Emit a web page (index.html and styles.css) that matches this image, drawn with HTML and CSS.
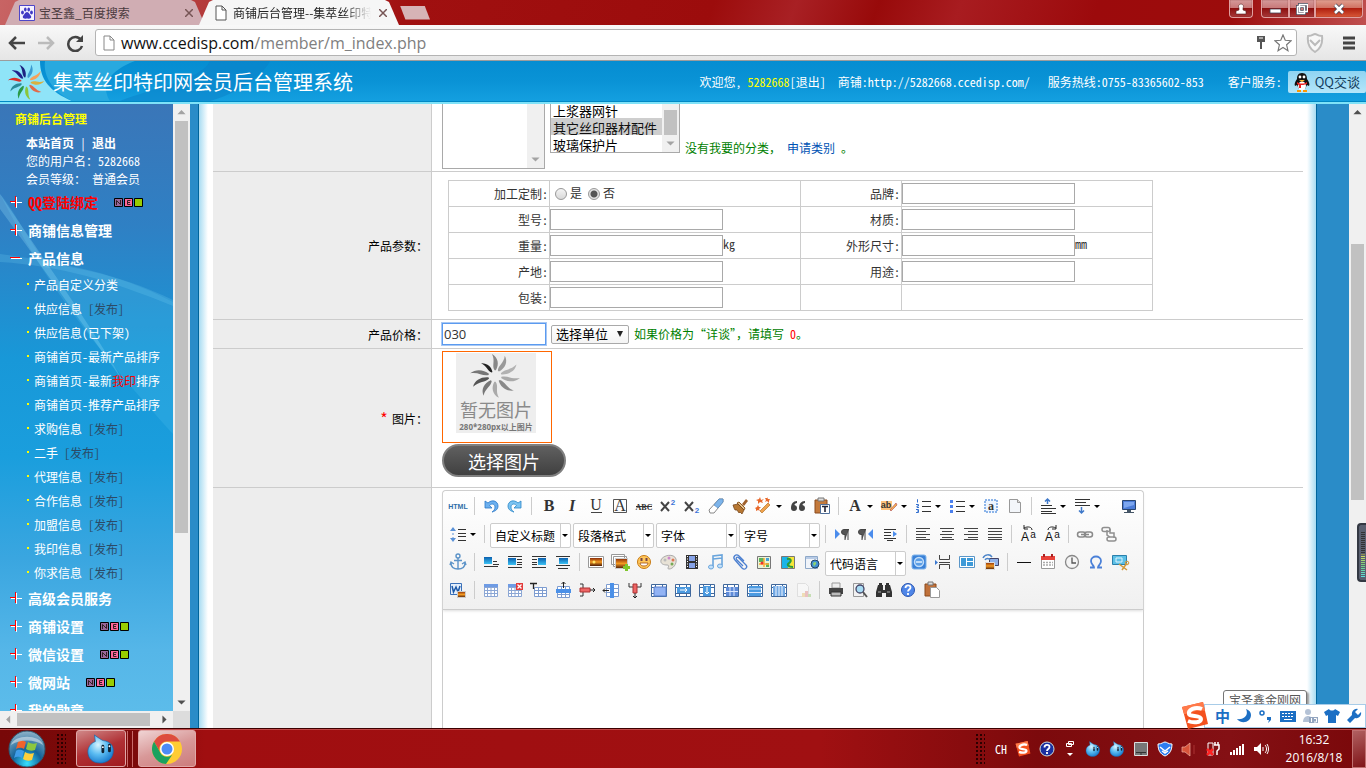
FILE: index.html
```html
<!DOCTYPE html>
<html lang="zh-CN">
<head>
    <meta charset="UTF-8">
    <meta name="viewport" content="width=device-width, initial-scale=1.0">
    <title>商铺后台管理--集萃丝印特印网</title>
    <link rel="stylesheet" href="styles.css">
</head>
<body>
    <!-- Shared icon shapes -->
    <svg class="sprite" aria-hidden="true">
        <defs>
            <linearGradient id="g-sky" x1="0" y1="0" x2="0" y2="1"><stop offset="0" stop-color="#0a5fae"/><stop offset="1" stop-color="#3cc3f5"/></linearGradient>
            <linearGradient id="g-sunset" x1="0" y1="0" x2="0" y2="1"><stop offset="0" stop-color="#8a2c08"/><stop offset=".5" stop-color="#f49a22"/><stop offset="1" stop-color="#4a1a08"/></linearGradient>
            <radialGradient id="g-orb" cx=".5" cy=".9" r=".9"><stop offset="0" stop-color="#35e0ff"/><stop offset=".45" stop-color="#12639a"/><stop offset="1" stop-color="#8fb3c8"/></radialGradient>
            <radialGradient id="g-drop" cx=".4" cy=".35" r=".7"><stop offset="0" stop-color="#d8f4ff"/><stop offset=".5" stop-color="#5bbcf2"/><stop offset="1" stop-color="#1678cc"/></radialGradient>
        </defs>
        <symbol id="petal" viewBox="-5 -20 10 20" overflow="visible"><path d="M-.5-5C-3-9 0-13-3-19C2-16 3-10 .5-5z"/></symbol>
        <symbol id="plus" viewBox="0 0 12 12"><path d="M1 6.500h11M6.500 1v11" stroke="#fff"/><path d="M0 5.500h6M5.500 0v6M5.500 6v5" stroke="#f00"/></symbol>
        <symbol id="minus" viewBox="0 0 12 12"><path d="M1 6.500h11" stroke="#fff"/><path d="M0 5.500h10" stroke="#f00"/></symbol>
        <symbol id="new" viewBox="0 0 29 9">
            <rect width="9" height="9" rx="1"/><rect x="10" width="9" height="9" rx="1"/><rect x="20" width="9" height="9" rx="1"/>
            <path fill="#969" d="M1 1h7v7h-7z"/><path fill="#f69" d="M11 1h7v7h-7z"/><path fill="#9c0" d="M21 1h7v7h-7z"/>
            <path d="M2.500 7V2.500l4 4V2M16.500 2.500h-3v4h3M13 4.500h3" fill="none" stroke="#322"/>
        </symbol>
        <symbol id="file" viewBox="0 0 12 16"><path d="M1 1h6l4 4v10H1z" fill="#fff" stroke="currentColor"/><path d="M7 1v4h4" fill="none" stroke="currentColor"/></symbol>
        <symbol id="drop" viewBox="0 0 30 32"><path d="M8 1c4 3 7 5 9 6 9 1 12 7 11 13-1 7-7 11-14 11C6 31 1 26 1 19 1 14 4 10 9 8z" fill="url(#g-drop)" stroke="#1467ad" stroke-width=".7"/><path d="M17 13v6M24 12v6" stroke="#123" stroke-width="3" stroke-linecap="round"/><circle cx="17" cy="14" r="1" fill="#fff"/><circle cx="24" cy="13" r="1" fill="#fff"/></symbol>
        <symbol id="sogou" viewBox="0 0 28 28"><path d="M1 5 22 0l5 22-20 5z" fill="#f4511e"/><path d="M1 5 22 0l2 9C18 6 8 12 3 12z" fill="#ff7a4a"/><path d="M21 7C14 4 7 8 8 12c1 3 12 1 12 5 0 4-8 4-13 2" fill="none" stroke="#fff" stroke-width="4"/></symbol>

        <!-- Editor toolbar icons -->
        <symbol id="i-undo" viewBox="0 0 20 20"><path d="M4 5v7h7L8.500 9.500C11 7 14 8 14 11c0 2-1 4-3 5 4-1 6-3 6-6 0-5-6-7-10-3z" fill="#6cb0ef" stroke="#2b78c8" stroke-width=".8"/></symbol>
        <symbol id="i-redo" viewBox="0 0 20 20"><path d="M16 5v7H9l2.500-2.500C9 7 6 8 6 11c0 2 1 4 3 5-4-1-6-3-6-6 0-5 6-7 10-3z" fill="#7cc4f2" stroke="#2b86c8" stroke-width=".8"/></symbol>
        <symbol id="i-eraser" viewBox="0 0 20 20"><path d="m3 14 10-11h4v3L8 17H4z" fill="#fff" stroke="#888"/><path d="m8 9 5-6h4v3l-5 6z" fill="#7db4ea" stroke="#568cc4" stroke-width=".7"/></symbol>
        <symbol id="i-brush" viewBox="0 0 20 20"><path d="m12 8 4-5 2 2-4 5z" fill="#a0612c"/><path d="m9 6 6 6-1 2-7-7z" fill="#e4c18d" stroke="#8e5a25"/><path d="M3 9 8 8l6 6-2 4-2-2-1 1-2-3H5l-1-2z" fill="#b77732" stroke="#6d3c12" stroke-width=".7"/></symbol>
        <symbol id="i-magic" viewBox="0 0 20 20"><path d="m6 15 8-8 2 2-8 8z" fill="#f0a24c" stroke="#a86518" stroke-width=".6"/><path d="m6 1 1 3 3-1-2 2 1 2-3-1-2 2V5L2 4l3-1zM13 1l1 2h2l-1 2v2l-2-2-2 1 1-2-1-2h2zM4 9l1 2h2l-2 2 1 2-2-1-2 1v-2l-1-1 2-1z" fill="#e8692c"/></symbol>
        <symbol id="i-quote" viewBox="0 0 20 20"><path d="M9 5C5 5 3 8 3 12a3 3 0 1 0 3.500-3c0-1 1-2 2.500-2zM17 5c-4 0-6 3-6 7a3 3 0 1 0 3.500-3c0-1 1-2 2.500-2z" fill="#444"/></symbol>
        <symbol id="i-paste" viewBox="0 0 20 20"><path d="M3 4h12v13H3z" fill="#c47a3c" stroke="#8a4a1c"/><path d="M6 2h6v3H6z" fill="#ddd" stroke="#777"/><path d="M8.500 8.500h9v9h-9z" fill="#fff" stroke="#4f6f9a"/><path d="M10 10.500h6M13 10v6" stroke="#223" stroke-width="1.600"/></symbol>
        <symbol id="i-ol" viewBox="0 0 20 20"><path d="M9 5.500h9M9 10.500h9M9 15.500h9" stroke="#333"/><path d="M4 3.500h.5v3M3 8.500h2.500v1.500H4v1.500h2M3 13.500h2.500v3H3M4 15h2" fill="none" stroke="#3470cf"/></symbol>
        <symbol id="i-ul" viewBox="0 0 20 20"><path d="M9 5.500h9M9 10.500h9M9 15.500h9" stroke="#333"/><path d="M3 4h3v3H3zM3 9h3v3H3zM3 14h3v3H3z" fill="#4b80ee"/></symbol>
        <symbol id="i-doc" viewBox="0 0 20 20"><path d="M4.500 3.500h8l3 3v10h-11z" fill="#f3f6fa" stroke="#999"/><path d="M12.500 3.500v3h3" fill="#ddd" stroke="#999"/></symbol>
        <symbol id="i-rowtop" viewBox="0 0 20 20"><path d="M3 9.500h11M3 12.500h15M3 15.500h11M3 17.500h15" stroke="#333"/><path d="M9.500 3v5M7 5.500l2.500-2.500L12 5.500" fill="none" stroke="#3e78c9" stroke-width="1.500"/></symbol>
        <symbol id="i-rowbot" viewBox="0 0 20 20"><path d="M3 3.500h15M3 6.500h11M3 9.500h15" stroke="#333"/><path d="M9.500 11v6M7 14.500l2.500 2.500 2.500-2.500" fill="none" stroke="#3e78c9" stroke-width="1.500"/></symbol>
        <symbol id="i-screen" viewBox="0 0 20 20"><path d="M3.500 4.500h13v9h-13z" fill="#4b7cd8" stroke="#29456f"/><path d="M5 6h10v3L5 12z" fill="#7ca6ef"/><path d="M8 14h4v2H8zM5 16h10v1H5z" fill="#456"/></symbol>
        <symbol id="i-lineh" viewBox="0 0 20 20"><path d="M10 5.500h8M10 9.500h8M10 12.500h8M10 16.500h8" stroke="#333"/><path d="M5 4v3M5 9v2M5 13v3" stroke="#5a92d8"/><path d="m2 7 3-4 3 4zM2 14l3 4 3-4z" fill="#5a92d8"/></symbol>
        <symbol id="i-ltr" viewBox="0 0 20 20"><path d="m3 5 5 5-5 5z" fill="#4b8cec"/><path d="M17 5.500h-5a2.500 2.500 0 0 0 0 5h1V16M16 6v10" fill="#555" stroke="#444"/></symbol>
        <symbol id="i-rtl" viewBox="0 0 20 20"><path d="m17 5-5 5 5 5z" fill="#4b8cec"/><path d="M10 5.500H5a2.500 2.500 0 0 0 0 5h1V16M9 6v10" fill="#555" stroke="#444"/></symbol>
        <symbol id="i-indent" viewBox="0 0 20 20"><path d="M4 5.500h12M4 8.500h7M4 11.500h7M4 14.500h12M7 16.500h6" stroke="#333"/><path d="m13 7 4 3-4 3z" fill="#4b8cec"/></symbol>
        <symbol id="i-left" viewBox="0 0 20 20"><path d="M3 4.500h14M3 7.500h10M3 10.500h14M3 13.500h10M3 15.500h14" stroke="#444"/></symbol>
        <symbol id="i-center" viewBox="0 0 20 20"><path d="M3 4.500h14M5 7.500h10M3 10.500h14M5 13.500h10M3 15.500h14" stroke="#444"/></symbol>
        <symbol id="i-right" viewBox="0 0 20 20"><path d="M3 4.500h14M7 7.500h10M3 10.500h14M7 13.500h10M3 15.500h14" stroke="#444"/></symbol>
        <symbol id="i-justify" viewBox="0 0 20 20"><path d="M3 4.500h14M3 7.500h14M3 10.500h14M3 13.500h14M3 15.500h14" stroke="#444"/></symbol>
        <symbol id="i-link" viewBox="0 0 20 20"><g fill="none" stroke="#8a8a8a" stroke-width="1.500"><rect x="2.500" y="8" width="8" height="5" rx="2.500"/><rect x="9.500" y="8" width="8" height="5" rx="2.500"/><path d="M6 10.500h8"/></g></symbol>
        <symbol id="i-unlink" viewBox="0 0 20 20"><g fill="none" stroke="#909090" stroke-width="1.500"><rect x="3" y="3.500" width="8" height="4" rx="2"/><rect x="8" y="13" width="9" height="4" rx="2"/><path d="M8 6v5l3 2M11 5v4h4v5"/></g></symbol>
        <symbol id="i-anchor" viewBox="0 0 20 20"><circle cx="10" cy="4" r="2" fill="none" stroke="#5c93c8" stroke-width="1.400"/><path d="M10 6v11M6 8.500h8M3 11c0 4 3 6 7 6s7-2 7-6M2 13l1-3 3 2M18 13l-1-3-3 2" fill="none" stroke="#5c93c8" stroke-width="1.400"/></symbol>
        <symbol id="i-imgnone" viewBox="0 0 20 20"><path d="M3 5h8v7H3z" fill="url(#g-sky)"/><path d="M12 9.500h4M12 12.500h6M3 14.500h14" stroke="#333"/></symbol>
        <symbol id="i-imgleft" viewBox="0 0 20 20"><path d="M3 6h8v7H3z" fill="url(#g-sky)"/><path d="M3 4.500h14M12 7.500h5M12 10.500h5M12 12.500h5M3 15.500h14" stroke="#333"/></symbol>
        <symbol id="i-imgright" viewBox="0 0 20 20"><path d="M9 6h8v7H9z" fill="url(#g-sky)"/><path d="M3 4.500h14M3 7.500h5M3 10.500h5M3 12.500h5M3 15.500h14" stroke="#333"/></symbol>
        <symbol id="i-imgcenter" viewBox="0 0 20 20"><path d="M6 6h9v6H6z" fill="url(#g-sky)"/><path d="M3 4.500h14M3 13.500h14M5 16.500h10" stroke="#333"/></symbol>
        <symbol id="i-image" viewBox="0 0 20 20"><path d="M2.500 4.500h15v11h-15z" fill="#fff" stroke="#999"/><path d="M4 6h12v8H4z" fill="url(#g-sunset)"/><circle cx="8" cy="10" r="1.500" fill="#ffe66a"/></symbol>
        <symbol id="i-images" viewBox="0 0 20 20"><path d="M1.500 2.500h13v10h-13zM3.500 4.500h13v10h-13z" fill="#fff" stroke="#999"/><path d="M5.500 6.500h12v10h-12z" fill="url(#g-sunset)" stroke="#ccc"/><path d="M13 14h2v-2h3v2h2v3h-2v2h-3v-2h-2z" fill="#7fc62c"/></symbol>
        <symbol id="i-smile" viewBox="0 0 20 20"><circle cx="10" cy="10" r="6.500" fill="#ffc65a" stroke="#c87a14"/><path d="M7.500 6v3M12.500 6v3" stroke="#744" stroke-width="2"/><path d="M6 11h8c0 4-8 4-8 0z" fill="#fff" stroke="#a04c10" stroke-width=".8"/></symbol>
        <symbol id="i-palette" viewBox="0 0 20 20"><path d="M3 8c2-5 13-7 15-1 1 5-3 10-7 10-3 0 2-4-2-4-3 0-7-1-6-5z" fill="#e8e2d6" stroke="#aaa"/><circle cx="7" cy="8" r="1.500" fill="#bbb"/><circle cx="11" cy="6" r="1.500" fill="#c8c"/><circle cx="15" cy="8" r="1.500" fill="#d75"/><circle cx="14" cy="12" r="1.500" fill="#7a5"/></symbol>
        <symbol id="i-video" viewBox="0 0 20 20"><path d="M4 3h12v14H4z" fill="#333"/><path d="M7 4h6v5H7zM7 11h6v5H7z" fill="#86a3e8"/><path d="M5.500 4v12M14.500 4v12" stroke="#fff" stroke-dasharray="1 1.500"/></symbol>
        <symbol id="i-music" viewBox="0 0 20 20"><path d="M7 15V4l9-1v10M7 7l9-1" fill="none" stroke="#6aa5dc" stroke-width="1.600"/><ellipse cx="5" cy="15" rx="2.500" ry="2" fill="#c4e1fa" stroke="#6aa5dc"/><ellipse cx="14" cy="14" rx="2.500" ry="2" fill="#c4e1fa" stroke="#6aa5dc"/></symbol>
        <symbol id="i-clip" viewBox="0 0 20 20"><path d="m14 9-5-5C6 1 2 5 5 8l7 8c3 3 6-1 4-3L9 6C7 4 5 6 7 8l6 6" fill="none" stroke="#4b7fd0" stroke-width="1.300"/></symbol>
        <symbol id="i-map" viewBox="0 0 20 20"><path d="M3.500 4.500h13v12h-13z" fill="#e9f3d8" stroke="#777"/><path d="M5 6h5v4H5zM12 11h3v4h-3z" fill="#58b35c"/><path d="M10 6v9M5 12h10" stroke="#fa3" stroke-width="1.500"/><path d="M12 6h3v3h-3z" fill="#45a0d8"/><circle cx="8" cy="11" r="1.500" fill="#e33"/></symbol>
        <symbol id="i-gmap" viewBox="0 0 20 20"><path d="M3.500 4.500h13v12h-13z" fill="#f6e636" stroke="#777"/><path d="M4 5h6l3 5-3 6H4z" fill="#1ab4e8"/><path d="M9 7c4-1 5 2 2 4s0 4 4 4" fill="none" stroke="#2a9a3a" stroke-width="2"/></symbol>
        <symbol id="i-frame" viewBox="0 0 20 20"><path d="M3.500 4.500h12v12h-12z" fill="#f0f4fa" stroke="#8ea8c8"/><path d="M4 5h11v2H4z" fill="#b8cbe6"/><circle cx="13" cy="12" r="4" fill="#3f8fd4" stroke="#246"/><path d="M11 11c2-2 4-1 3 1s-2 1-2 3z" fill="#8fd470"/></symbol>
        <symbol id="i-app" viewBox="0 0 20 20"><rect x="3" y="3" width="14" height="14" rx="2" fill="#3b82d8" stroke="#7fb3ea"/><circle cx="10" cy="10" r="4.500" fill="#5b9ee6" stroke="#c0dcf8" stroke-width="1.500"/><path d="M7 10h6" stroke="#e0f0ff" stroke-width="1.500"/></symbol>
        <symbol id="i-pagebreak" viewBox="0 0 20 20"><path d="M6.500 3v4.500h10V3M6.500 17v-4.500h10V17M6 10.500h11" fill="none" stroke="#444"/><path d="m2 8 3 2.500L2 13z" fill="#3a78d0"/></symbol>
        <symbol id="i-template" viewBox="0 0 20 20"><path d="M2.500 4.500h15v11h-15z" fill="#fff" stroke="#5a96c8"/><path d="M4 6h5v8H4zM10 6h6v3h-6zM10 10h6v4h-6z" fill="#3d9ad8"/></symbol>
        <symbol id="i-remote" viewBox="0 0 20 20"><path d="M8.500 6.500h9v7h-9z" fill="#8fb0e8" stroke="#446"/><path d="M4.500 10.500h9v7h-9z" fill="url(#g-sunset)" stroke="#ddd"/><path d="M2 6c2-4 7-4 9-1M4 8c1-2 4-2 5 0" fill="none" stroke="#4a83c8" stroke-width="1.500"/></symbol>
        <symbol id="i-hr" viewBox="0 0 20 20"><path d="M3 10.500h14" stroke="#111"/></symbol>
        <symbol id="i-date" viewBox="0 0 20 20"><path d="M3.500 4.500h13v12h-13z" fill="#fff" stroke="#999"/><path d="M3 4h14v4H3z" fill="#e8423a"/><path d="M6 2v3M14 2v3" stroke="#a22" stroke-width="2"/><path d="M5 10.500h10M5 13h10" stroke="#aaa" stroke-width="1.500" stroke-dasharray="2 1"/></symbol>
        <symbol id="i-time" viewBox="0 0 20 20"><circle cx="10" cy="10" r="6.500" fill="#f4f4f4" stroke="#888" stroke-width="1.300"/><path d="M10 5.500V11h4" fill="none" stroke="#555" stroke-width="1.300"/></symbol>
        <symbol id="i-omega" viewBox="0 0 20 20"><path d="M4 15.500h4c0-2-3-3-3-6.500 0-6 10-6 10 0 0 3.500-3 4.500-3 6.500h4" fill="none" stroke="#4a80d8" stroke-width="1.800"/></symbol>
        <symbol id="i-snap" viewBox="0 0 20 20"><path d="M2.500 3.500h14v9h-14z" fill="#5cc0e6" stroke="#2b80ac"/><path d="M6 6h6v4H6zM6 15h6" fill="none" stroke="#dff4ff"/><path d="m9 12 8 6M17 11l-5 7" stroke="#d29a3c" stroke-width="1.500"/><circle cx="17" cy="11" r="1.800" fill="none" stroke="#d29a3c"/></symbol>
        <symbol id="i-word" viewBox="0 0 20 20"><path d="M2.500 3.500h11v11h-11z" fill="#e4effc" stroke="#3a70b8"/><path d="m4 6 1.500 6L8 7l2 5 2-6" fill="none" stroke="#1b58a8" stroke-width="1.500"/><path d="M9.500 11.500h8v6h-8z" fill="url(#g-sunset)" stroke="#ccc"/></symbol>
        <symbol id="i-grid" viewBox="0 0 20 20"><path d="M3.500 4.500h13v12h-13zM3 7.500h14M3 10.500h14M3 13.500h14M6.500 7v10M10 7v10M13.500 7v10" fill="#fff" stroke="#8ba6d4"/></symbol>
        <symbol id="i-table" viewBox="0 0 20 20"><use href="#i-grid"/><path d="M3 4h14v3H3z" fill="#6e9be4"/></symbol>
        <symbol id="i-tabledel" viewBox="0 0 20 20"><use href="#i-table"/><path d="M11 3h7v7h-7z" fill="#e23a3a"/><path d="m12.500 4.500 4 4M16.500 4.500l-4 4" stroke="#fff" stroke-width="1.300"/></symbol>
        <symbol id="i-tabletitle" viewBox="0 0 20 20"><path d="M5.500 7.500h12v9h-12zM5 10.500h12M5 13.500h12M9.500 8v9M13.500 8v9" fill="#fff" stroke="#7d9cd0"/><path d="M1 3.500h7M4.500 3v6" stroke="#222" stroke-width="1.300"/></symbol>
        <symbol id="i-rowins" viewBox="0 0 20 20"><path d="M4.500 6.500h12v11h-12zM4 14.500h12M8.500 6v11M12.500 6v11" fill="#fff" stroke="#7d9cd0"/><path d="M3 9h15v4H3z" fill="#4b90e8"/><path d="M10.500 8V2M8.500 4l2-2 2 2" fill="none" stroke="#222"/></symbol>
        <symbol id="i-rowdel" viewBox="0 0 20 20"><path d="M3 4h3v4M3 16h3v-4" fill="none" stroke="#333"/><path d="M3 8h10v4H3z" fill="#e66" stroke="#a33"/><path d="M13 10h5M16 8l2 2-2 2" fill="none" stroke="#222"/></symbol>
        <symbol id="i-colins" viewBox="0 0 20 20"><path d="M5.500 4.500h12v12h-12zM5 8.500h12M5 12.500h12" fill="#fff" stroke="#7d9cd0"/><path d="M9 3h4v15H9z" fill="#4b90e8"/><path d="M8 10.500H2M4 8.500l-2 2 2 2" fill="none" stroke="#222"/></symbol>
        <symbol id="i-coldel" viewBox="0 0 20 20"><path d="M4 3v4h4M16 3v4h-4" fill="none" stroke="#333"/><path d="M8 4h4v9H8z" fill="#e66" stroke="#a33"/><path d="M10 13v5M8 16l2 2 2-2" fill="none" stroke="#222"/></symbol>
        <symbol id="i-mergebase" viewBox="0 0 20 20"><path d="M2.500 4.500h15v12h-15zM6.500 4v12M13.500 4v12M2 7.500h15M2 13.500h15" fill="#fff" stroke="#40689c"/></symbol>
        <symbol id="i-merge" viewBox="0 0 20 20"><use href="#i-mergebase"/><path d="M5 7h12v9H5z" fill="#92b3f4" stroke="#5a80cc"/></symbol>
        <symbol id="i-mergeright" viewBox="0 0 20 20"><use href="#i-mergebase"/><path d="M4 7h13v6H4z" fill="#4b9ae0"/><path d="M7 10h7M12 8l2 2-2 2" fill="none" stroke="#fff"/></symbol>
        <symbol id="i-mergedown" viewBox="0 0 20 20"><use href="#i-mergebase"/><path d="M6 6h8v10H6z" fill="#4b9ae0"/><path d="M10 7v7M8 12l2 2 2-2" fill="none" stroke="#fff"/></symbol>
        <symbol id="i-splitcells" viewBox="0 0 20 20"><use href="#i-mergebase"/><path d="M5 7h12v9H5z" fill="#5f8bd8"/><path d="M5 11.500h12M9 7v9M13 7v9" stroke="#dbe8ff"/></symbol>
        <symbol id="i-splitrows" viewBox="0 0 20 20"><use href="#i-mergebase"/><path d="M4 6h12v10H4z" fill="#4b9ae0"/><path d="M4 9h12M4 12.500h12" stroke="#dbe8ff"/></symbol>
        <symbol id="i-splitcols" viewBox="0 0 20 20"><use href="#i-mergebase"/><path d="M4 6h12v10H4z" fill="#72a9e4"/><path d="M7 6v10M10 6v10M13 6v10" stroke="#eef5ff"/></symbol>
        <symbol id="i-chart" viewBox="0 0 20 20"><g opacity=".35"><path d="M4.500 3.500h8l3 3v10h-11z" fill="#fff" stroke="#bbb"/><path d="M9 13h3v4H9z" fill="#e8b84a"/><path d="M12 11h3v6h-3z" fill="#d66"/><path d="M15 14h3v3h-3z" fill="#7b4"/></g></symbol>
        <symbol id="i-print" viewBox="0 0 20 20"><path d="M6 3h8v5H6z" fill="#eee" stroke="#999"/><path d="M3 8h14v6H3z" fill="#444"/><path d="M5 12h10v4H5z" fill="#bbb" stroke="#333"/></symbol>
        <symbol id="i-preview" viewBox="0 0 20 20"><path d="M3.500 3.500h10v13h-10z" fill="#f2f2f2" stroke="#999"/><circle cx="10" cy="9" r="4" fill="#a8dcf4" stroke="#446" stroke-width="1.300"/><path d="m13 12 4 5" stroke="#555" stroke-width="2"/></symbol>
        <symbol id="i-find" viewBox="0 0 20 20"><path d="M5 3h3v2H5zM12 3h3v2h-3zM4 5h5v5h2V5h5l2 7v5h-6v-4H8v4H2v-5z" fill="#333"/><path d="M4 12h3M13 12h3" stroke="#aaa"/></symbol>
        <symbol id="i-help" viewBox="0 0 20 20"><circle cx="10" cy="10" r="6.500" fill="#4f86e8" stroke="#2a55b0"/><path d="M7.500 8c0-3.500 5-3.500 5-.5 0 2-2.500 2-2.500 4M10 13v2" fill="none" stroke="#fff" stroke-width="1.800"/></symbol>
        <symbol id="i-drafts" viewBox="0 0 20 20"><path d="M3 4h11v12H3z" fill="#c0713a" stroke="#8a4a1c"/><path d="M6 2h5v3H6z" fill="#ddd" stroke="#777"/><path d="M8.500 7.500h6l3 3v7h-9z" fill="#fff" stroke="#999"/></symbol>
    </svg>

    <!-- Browser tabs -->
    <div class="tabstrip">
        <div class="tab tab-idle">
            <svg class="tab-icon" viewBox="0 0 16 16"><path d="M.5.500h15v15H.5z" fill="#f5f3ff" stroke="#4e46c8"/><g fill="#3f39c4"><ellipse cx="3.500" cy="7.500" rx="1.400" ry="2"/><ellipse cx="6.300" cy="4.500" rx="1.300" ry="2"/><ellipse cx="9.700" cy="4.500" rx="1.300" ry="2"/><ellipse cx="12.500" cy="7.500" rx="1.400" ry="2"/><path d="M8 7c2 0 2.500 2.500 4 4 1 2-1 3-4 2.500-3 .5-5-.5-4-2.500 1.500-1.500 2-4 4-4z"/></g></svg>
            <span class="tab-title">宝圣鑫_百度搜索</span>
            <button class="tab-close" aria-label="关闭"><svg viewBox="0 0 8 8"><path d="m0 0 8 8M8 0 0 8" stroke="currentColor" stroke-width="1.500"/></svg></button>
        </div>
        <div class="tab tab-active">
            <svg class="tab-icon"><use href="#file"/></svg>
            <span class="tab-title">商铺后台管理--集萃丝印特印网</span>
            <button class="tab-close" aria-label="关闭"><svg viewBox="0 0 8 8"><path d="m0 0 8 8M8 0 0 8" stroke="currentColor" stroke-width="1.500"/></svg></button>
        </div>
        <button class="tab-new" aria-label="新标签页"></button>
        <div class="window-controls">
            <button class="win user" aria-label="用户"><svg viewBox="0 0 12 12"><path d="M6 1a2.500 2.500 0 0 1 2 4v2l3 1v3H1V8l3-1V5a2.500 2.500 0 0 1 2-4z" fill="#fff" stroke="#522" stroke-width=".6"/></svg></button>
            <button class="win min" aria-label="最小化"><svg viewBox="0 0 12 12"><path d="M1 6h11v4H1z" fill="#fff" stroke="#445" stroke-width=".8"/></svg></button>
            <button class="win max" aria-label="还原"><svg viewBox="0 0 12 12"><path d="M3.500 1.500h8v7h-8zM1.500 3.500h7v7h-7z" fill="#c77" stroke="#445" stroke-width="3"/><path d="M3.500 1.500h8v7h-8zM1.500 3.500h7v7h-7z" fill="none" stroke="#fff" stroke-width="1.500"/></svg></button>
            <button class="win close" aria-label="关闭窗口"><svg viewBox="0 0 12 12"><path d="m2 2 8 8M10 2l-8 8" stroke="#445" stroke-width="4"/><path d="m2 2 8 8M10 2l-8 8" stroke="#fff" stroke-width="2.500"/></svg></button>
        </div>
    </div>

    <!-- Address bar -->
    <div class="toolbar">
        <button class="nav-btn" aria-label="后退"><svg viewBox="0 0 18 18"><path d="M17 9H3M8 3 2 9l6 6" fill="none" stroke="#444" stroke-width="2.500"/></svg></button>
        <button class="nav-btn" aria-label="前进"><svg viewBox="0 0 18 18"><path d="M1 9h14M10 3l6 6-6 6" fill="none" stroke="#bbb" stroke-width="2.500"/></svg></button>
        <button class="nav-btn" aria-label="刷新"><svg viewBox="0 0 18 18"><path d="M15 6a7 7 0 1 0 1 6" fill="none" stroke="#444" stroke-width="2.500"/><path d="M17 1v7h-7z" fill="#444"/></svg></button>
        <div class="omnibox">
            <svg class="page-icon"><use href="#file"/></svg>
            <span class="url">www.ccedisp.com<span class="path">/member/m_index.php</span></span>
            <svg class="key" viewBox="0 0 10 16"><path d="M1 1h8v6H6v7H4V7H1z" fill="#555"/><path d="M3 3h4" stroke="#fff"/></svg>
            <svg class="star" viewBox="0 0 20 20"><path d="m10 1 2.500 6 6.500.500-5 4.500 1.500 6.500L10 15l-5.500 3.500L6 12 1 7.500 7.500 7z" fill="#fff" stroke="#777" stroke-width="1.300"/></svg>
        </div>
        <button class="ext" aria-label="扩展"><svg viewBox="0 0 18 20"><path d="M2 3c5 0 5-2 7-2s2 2 7 2c1 8-2 13-7 16C4 16 1 11 2 3z" fill="#f8f8f8" stroke="#bbb" stroke-width="2"/><path d="m4 7 5 5 5-5" fill="none" stroke="#bbb" stroke-width="2"/></svg></button>
        <button class="menu" aria-label="菜单"><svg viewBox="0 0 14 14"><path d="M1 2h12M1 7h12M1 12h12" stroke="#444" stroke-width="3"/></svg></button>
    </div>

    <!-- Site header -->
    <header class="site-header">
        <svg class="header-art" viewBox="0 0 400 43" preserveAspectRatio="none" aria-hidden="true"><path d="M0 0h40C40 20 50 33 72 43H0z" fill="#8fe4f8"/><path d="M45 0h90C110 10 100 26 110 43H72C52 32 43 16 45 0z" fill="#28a9df"/><path d="M150 0h60c-8 20-60 30-90 43h90c30-10 50-24 60-43z" fill="#0a80c8" opacity=".5"/></svg>
        <svg class="logo" viewBox="-21 -20 42 40" aria-hidden="true">
            <g fill="#1d2380"><use href="#petal" x="-5" y="-20" width="10" height="20" transform="rotate(-12)"/></g>
            <g fill="#20208a"><use href="#petal" x="-5" y="-20" width="10" height="20" transform="rotate(-42)"/></g>
            <g fill="#3a9ad0"><use href="#petal" x="-5" y="-20" width="10" height="20" transform="rotate(25)"/></g>
            <g fill="#f5a05a"><use href="#petal" x="-5" y="-20" width="10" height="20" transform="rotate(62)"/></g>
            <g fill="#d8b040"><use href="#petal" x="-5" y="-20" width="10" height="20" transform="rotate(96)"/></g>
            <g fill="#e06a4a"><use href="#petal" x="-5" y="-20" width="10" height="20" transform="rotate(132)"/></g>
            <g fill="#8cc63a"><use href="#petal" x="-5" y="-20" width="10" height="20" transform="rotate(175)"/></g>
            <g fill="#2a9a48"><use href="#petal" x="-5" y="-20" width="10" height="20" transform="rotate(212)"/></g>
            <g fill="#2a8a9a"><use href="#petal" x="-5" y="-20" width="10" height="20" transform="rotate(248)"/></g>
            <g fill="#d8302a"><use href="#petal" x="-5" y="-20" width="10" height="20" transform="rotate(284)"/></g>
        </svg>
        <h1>集萃丝印特印网会员后台管理系统</h1>
        <div class="header-links">
            <span>欢迎您, <b>5282668</b><a href="#">[退出]</a></span>
            <span>商铺:<a href="#">http://5282668.ccedisp.com/</a></span>
            <span class="hotline">服务热线:0755-83365602-853</span>
            <span class="service">客户服务:</span>
        </div>
        <a class="qq" href="#">
            <svg viewBox="0 0 16 20" aria-hidden="true"><path d="M8 1c4 0 5 3 5 6 2 3 3 5 2 7l-2-1-2 4H5l-2-4-2 1c-1-2 0-4 2-7 0-3 1-6 5-6z" fill="#111"/><ellipse cx="8" cy="14" rx="4" ry="4.500" fill="#fff"/><circle cx="6" cy="5" r="1.400" fill="#fff"/><circle cx="10" cy="5" r="1.400" fill="#fff"/><path d="M5 8h6l-3 2z" fill="#fb3"/><path d="M3 10c3 2 7 2 10 0v2c-3 1-5 1-6 1v3H5v-3L3 12z" fill="#e22"/><path d="M3 18h4v2H3zM9 18h4v2H9z" fill="#f90"/></svg>
            QQ交谈
        </a>
    </header>

    <div class="workspace">
        <!-- Side menu -->
        <div class="side">
            <nav class="side-menu">
                <svg class="side-art" viewBox="0 0 173 607" preserveAspectRatio="none" aria-hidden="true">
                    <path d="M0 90C50 190 110 260 173 330V198C110 165 70 165 45 158 25 130 10 100 0 90z" fill="#5cc6ee" opacity=".2"/>
                    <path d="M0 150c60 8 120 20 173 46v6C110 176 60 162 0 158z" fill="#7fd8f5" opacity=".2"/>
                    <path d="M0 90c40 60 90 130 125 190C90 230 40 160 0 105z" fill="#a4e6fa" opacity=".25"/>
                </svg>
                <h2>商铺后台管理</h2>
                <div class="account">
                    <p><a class="strong" href="#">本站首页</a> | <a class="strong" href="#">退出</a></p>
                    <p>您的用户名：5282668</p>
                    <p>会员等级： 普通会员</p>
                </div>
                <h3 class="hot"><svg class="toggle"><use href="#plus"/></svg>QQ登陆绑定<svg class="new"><use href="#new"/></svg></h3>
                <h3><svg class="toggle"><use href="#plus"/></svg>商铺信息管理</h3>
                <h3><svg class="toggle"><use href="#minus"/></svg>产品信息</h3>
                <ul>
                    <li><a href="#">产品自定义分类</a></li>
                    <li><a href="#">供应信息</a> <a class="post" href="#">[发布]</a></li>
                    <li><a href="#">供应信息(已下架)</a></li>
                    <li><a href="#">商铺首页-最新产品排序</a></li>
                    <li><a href="#">商铺首页-最新<em>我印</em>排序</a></li>
                    <li><a href="#">商铺首页-推荐产品排序</a></li>
                    <li><a href="#">求购信息</a> <a class="post" href="#">[发布]</a></li>
                    <li><a href="#">二手</a> <a class="post" href="#">[发布]</a></li>
                    <li><a href="#">代理信息</a> <a class="post" href="#">[发布]</a></li>
                    <li><a href="#">合作信息</a> <a class="post" href="#">[发布]</a></li>
                    <li><a href="#">加盟信息</a> <a class="post" href="#">[发布]</a></li>
                    <li><a href="#">我印信息</a> <a class="post" href="#">[发布]</a></li>
                    <li><a href="#">你求信息</a> <a class="post" href="#">[发布]</a></li>
                </ul>
                <h3><svg class="toggle"><use href="#plus"/></svg>高级会员服务</h3>
                <h3><svg class="toggle"><use href="#plus"/></svg>商铺设置<svg class="new"><use href="#new"/></svg></h3>
                <h3><svg class="toggle"><use href="#plus"/></svg>微信设置<svg class="new"><use href="#new"/></svg></h3>
                <h3><svg class="toggle"><use href="#plus"/></svg>微网站<svg class="new"><use href="#new"/></svg></h3>
                <h3><svg class="toggle"><use href="#plus"/></svg>我的勋章</h3>
            </nav>
            <div class="vbar side-vbar"><i class="up off"></i><i class="thumb"></i><i class="down"></i></div>
            <div class="hbar"><i class="left off"></i><i class="thumb"></i><i class="right"></i></div>
            <div class="corner"></div>
        </div>

        <!-- Product form -->
        <main class="frame">
            <form class="panel">
                <div class="row">
                    <div class="label"></div>
                    <div class="field field-category">
                        <div class="listbox listbox-sub">
                            <select size="5" aria-label="子类别"></select>
                            <div class="vbar"><i></i><i class="down off"></i></div>
                        </div>
                        <div class="listbox listbox-main">
                            <select size="4" aria-label="类别">
                                <option>感光胶</option>
                                <option>上浆器网针</option>
                                <option selected>其它丝印器材配件</option>
                                <option>玻璃保护片</option>
                            </select>
                            <div class="vbar"><i></i><i class="thumb"></i><i class="down off"></i></div>
                        </div>
                        <p class="hint">没有我要的分类， <a href="#">申请类别</a> 。</p>
                    </div>
                </div>
                <div class="row">
                    <div class="label">产品参数：</div>
                    <div class="field field-params">
                        <table class="params">
                            <colgroup><col class="name"><col><col class="name"><col></colgroup>
                            <tr>
                                <th>加工定制:</th>
                                <td><label><input type="radio" name="custom">是</label> <label><input type="radio" name="custom" checked>否</label></td>
                                <th><label for="brand">品牌:</label></th>
                                <td><input type="text" id="brand"></td>
                            </tr>
                            <tr>
                                <th><label for="model">型号:</label></th>
                                <td><input type="text" id="model"></td>
                                <th><label for="material">材质:</label></th>
                                <td><input type="text" id="material"></td>
                            </tr>
                            <tr>
                                <th><label for="weight">重量:</label></th>
                                <td><input type="text" id="weight">kg</td>
                                <th><label for="size">外形尺寸:</label></th>
                                <td><input type="text" id="size">mm</td>
                            </tr>
                            <tr>
                                <th><label for="origin">产地:</label></th>
                                <td><input type="text" id="origin"></td>
                                <th><label for="usage">用途:</label></th>
                                <td><input type="text" id="usage"></td>
                            </tr>
                            <tr>
                                <th><label for="pack">包装:</label></th>
                                <td><input type="text" id="pack"></td>
                                <th></th>
                                <td></td>
                            </tr>
                        </table>
                    </div>
                </div>
                <div class="row">
                    <label class="label" for="price">产品价格：</label>
                    <div class="field field-price">
                        <input type="text" id="price" value="030">
                        <span class="unit"><select aria-label="选择单位"><option>选择单位</option></select></span>
                        <p class="hint">如果价格为“详谈”，请填写 <em>0</em>。</p>
                    </div>
                </div>
                <div class="row">
                    <div class="label"><em>*</em>图片：</div>
                    <div class="field field-image">
                        <div class="thumbnail">
                            <svg viewBox="0 0 80 80" role="img" aria-label="暂无图片">
                                <path d="M0 0h80v80H0z" fill="#eee"/>
                                <g transform="translate(39 23) scale(1.300 1.150)">
                                    <g fill="#222"><use href="#petal" x="-5" y="-20" width="10" height="20" transform="rotate(-35) scale(.8)"/></g>
                                    <g fill="#888"><use href="#petal" x="-5" y="-20" width="10" height="20" transform="rotate(2)"/></g>
                                    <g fill="#999"><use href="#petal" x="-5" y="-20" width="10" height="20" transform="rotate(32)"/></g>
                                    <g fill="#b2b2b2"><use href="#petal" x="-5" y="-20" width="10" height="20" transform="rotate(68)"/></g>
                                    <g fill="#aaa"><use href="#petal" x="-5" y="-20" width="10" height="20" transform="rotate(104)"/></g>
                                    <g fill="#8a8a8a"><use href="#petal" x="-5" y="-20" width="10" height="20" transform="rotate(140)"/></g>
                                    <g fill="#aaa"><use href="#petal" x="-5" y="-20" width="10" height="20" transform="rotate(180)"/></g>
                                    <g fill="#777"><use href="#petal" x="-5" y="-20" width="10" height="20" transform="rotate(216)"/></g>
                                    <g fill="#555"><use href="#petal" x="-5" y="-20" width="10" height="20" transform="rotate(250)"/></g>
                                    <g fill="#777"><use href="#petal" x="-5" y="-20" width="10" height="20" transform="rotate(286)"/></g>
                                </g>
                                <text x="40" y="64" class="t-none">暂无图片</text>
                                <text x="40" y="77" class="t-size">280*280px以上图片</text>
                            </svg>
                        </div>
                        <button type="button" class="pick">选择图片</button>
                    </div>
                </div>
                <div class="row row-editor">
                    <div class="label"></div>
                    <div class="field field-editor">
                        <div class="editor">
                            <div class="editor-bar">
                                <div class="bar-row">
                                    <button type="button" title="源代码"><svg viewBox="0 0 20 20"><text x="10" y="13" class="t-html">HTML</text></svg></button><i class="sep"></i>
                                    <button type="button" title="撤销"><svg><use href="#i-undo"/></svg></button>
                                    <button type="button" title="重做"><svg><use href="#i-redo"/></svg></button><i class="sep"></i>
                                    <button type="button" title="加粗"><svg viewBox="0 0 20 20"><text x="11" y="15" class="t-serif t-bold">B</text></svg></button>
                                    <button type="button" title="斜体"><svg viewBox="0 0 20 20"><text x="10" y="15" class="t-serif t-italic">I</text></svg></button>
                                    <button type="button" title="下划线"><svg viewBox="0 0 20 20"><text x="10" y="14" class="t-serif">U</text><path d="M5 16.500h11" stroke="#444"/></svg></button>
                                    <button type="button" title="字符边框"><svg viewBox="0 0 20 20"><path d="M3.500 3.500h13v13h-13z" fill="none" stroke="#555"/><text x="10" y="15" class="t-serif">A</text></svg></button>
                                    <button type="button" title="删除线"><svg viewBox="0 0 20 20"><text x="10" y="14" class="t-abc">ABC</text><path d="M2 10.500h16" stroke="#333"/></svg></button>
                                    <button type="button" title="上标"><svg viewBox="0 0 20 20"><path d="m3 6 8 9M11 6l-8 9" stroke="#444" stroke-width="2"/><text x="15" y="9" class="t-mini">2</text></svg></button>
                                    <button type="button" title="下标"><svg viewBox="0 0 20 20"><path d="m3 6 8 9M11 6l-8 9" stroke="#444" stroke-width="2"/><text x="15" y="17" class="t-mini">2</text></svg></button>
                                    <button type="button" title="清除格式"><svg><use href="#i-eraser"/></svg></button>
                                    <button type="button" title="格式刷"><svg><use href="#i-brush"/></svg></button>
                                    <button type="button" class="split" title="自动排版"><svg><use href="#i-magic"/></svg></button>
                                    <button type="button" title="引用"><svg><use href="#i-quote"/></svg></button>
                                    <button type="button" title="纯文本粘贴"><svg><use href="#i-paste"/></svg></button><i class="sep"></i>
                                    <button type="button" class="split" title="字体颜色"><svg viewBox="0 0 20 20"><text x="10" y="15" class="t-serif t-bold">A</text></svg></button>
                                    <button type="button" class="split" title="背景色"><svg viewBox="0 0 20 20"><path d="M2 5h11v9H2z" fill="#fec37c"/><text x="7" y="12" class="t-ab">ab</text><path d="m11 14 6-7 1 2-6 6z" fill="#f6b34c" stroke="#a45" stroke-width=".6"/></svg></button>
                                    <button type="button" class="split" title="有序列表"><svg><use href="#i-ol"/></svg></button>
                                    <button type="button" class="split" title="无序列表"><svg><use href="#i-ul"/></svg></button>
                                    <button type="button" title="全选"><svg viewBox="0 0 20 20"><path d="M4 4h12v12H4z" fill="#eef5ff" stroke="#8db5e9" stroke-width="2" stroke-dasharray="2 1"/><text x="10" y="14" class="t-sel">a</text></svg></button>
                                    <button type="button" title="清空文档"><svg><use href="#i-doc"/></svg></button><i class="sep"></i>
                                    <button type="button" class="split" title="段前距"><svg><use href="#i-rowtop"/></svg></button>
                                    <button type="button" class="split" title="段后距"><svg><use href="#i-rowbot"/></svg></button>
                                    <button type="button" class="full" title="全屏"><svg><use href="#i-screen"/></svg></button>
                                </div>
                                <div class="bar-row">
                                    <button type="button" class="split" title="行间距"><svg><use href="#i-lineh"/></svg></button><i class="sep"></i>
                                    <span class="combo"><select aria-label="自定义标题"><option>自定义标题</option></select></span>
                                    <span class="combo"><select aria-label="段落格式"><option>段落格式</option></select></span>
                                    <span class="combo"><select aria-label="字体"><option>字体</option></select></span>
                                    <span class="combo"><select aria-label="字号"><option>字号</option></select></span><i class="sep"></i>
                                    <button type="button" title="从左向右输入"><svg><use href="#i-ltr"/></svg></button>
                                    <button type="button" title="从右向左输入"><svg><use href="#i-rtl"/></svg></button>
                                    <button type="button" title="首行缩进"><svg><use href="#i-indent"/></svg></button><i class="sep"></i>
                                    <button type="button" title="居左对齐"><svg><use href="#i-left"/></svg></button>
                                    <button type="button" title="居中对齐"><svg><use href="#i-center"/></svg></button>
                                    <button type="button" title="居右对齐"><svg><use href="#i-right"/></svg></button>
                                    <button type="button" title="两端对齐"><svg><use href="#i-justify"/></svg></button><i class="sep"></i>
                                    <button type="button" title="字母大写"><svg viewBox="0 0 20 20"><text x="7" y="17" class="t-case">A</text><text x="15" y="14" class="t-a">a</text><path d="M14 6c0-3-4-4-8-2M6 1v4h4" fill="none" stroke="#222"/></svg></button>
                                    <button type="button" title="字母小写"><svg viewBox="0 0 20 20"><text x="7" y="17" class="t-case">A</text><text x="15" y="14" class="t-a">a</text><path d="M6 6c0-3 4-4 8-2M14 1v4h-4" fill="none" stroke="#222"/></svg></button><i class="sep"></i>
                                    <button type="button" title="超链接"><svg><use href="#i-link"/></svg></button>
                                    <button type="button" title="取消链接"><svg><use href="#i-unlink"/></svg></button>
                                </div>
                                <div class="bar-row">
                                    <button type="button" title="锚点"><svg><use href="#i-anchor"/></svg></button><i class="sep"></i>
                                    <button type="button" title="默认"><svg><use href="#i-imgnone"/></svg></button>
                                    <button type="button" title="左浮动"><svg><use href="#i-imgleft"/></svg></button>
                                    <button type="button" title="右浮动"><svg><use href="#i-imgright"/></svg></button>
                                    <button type="button" title="居中"><svg><use href="#i-imgcenter"/></svg></button><i class="sep"></i>
                                    <button type="button" title="单图上传"><svg><use href="#i-image"/></svg></button>
                                    <button type="button" title="多图上传"><svg><use href="#i-images"/></svg></button>
                                    <button type="button" title="表情"><svg><use href="#i-smile"/></svg></button>
                                    <button type="button" title="涂鸦"><svg><use href="#i-palette"/></svg></button>
                                    <button type="button" title="视频"><svg><use href="#i-video"/></svg></button>
                                    <button type="button" title="音乐"><svg><use href="#i-music"/></svg></button>
                                    <button type="button" title="附件"><svg><use href="#i-clip"/></svg></button>
                                    <button type="button" title="地图"><svg><use href="#i-map"/></svg></button>
                                    <button type="button" title="谷歌地图"><svg><use href="#i-gmap"/></svg></button>
                                    <button type="button" title="插入框架"><svg><use href="#i-frame"/></svg></button>
                                    <span class="combo"><select aria-label="代码语言"><option>代码语言</option></select></span>
                                    <button type="button" title="百度应用"><svg><use href="#i-app"/></svg></button>
                                    <button type="button" title="分页"><svg><use href="#i-pagebreak"/></svg></button>
                                    <button type="button" title="模板"><svg><use href="#i-template"/></svg></button>
                                    <button type="button" title="背景"><svg><use href="#i-remote"/></svg></button><i class="sep"></i>
                                    <button type="button" title="分隔线"><svg><use href="#i-hr"/></svg></button>
                                    <button type="button" title="日期"><svg><use href="#i-date"/></svg></button>
                                    <button type="button" title="时间"><svg><use href="#i-time"/></svg></button>
                                    <button type="button" title="特殊字符"><svg><use href="#i-omega"/></svg></button>
                                    <button type="button" title="截图"><svg><use href="#i-snap"/></svg></button>
                                </div>
                                <div class="bar-row">
                                    <button type="button" title="图片转存"><svg><use href="#i-word"/></svg></button><i class="sep"></i>
                                    <button type="button" title="插入表格"><svg><use href="#i-table"/></svg></button>
                                    <button type="button" title="删除表格"><svg><use href="#i-tabledel"/></svg></button>
                                    <button type="button" title="表格前插入行"><svg><use href="#i-tabletitle"/></svg></button>
                                    <button type="button" title="前插入行"><svg><use href="#i-rowins"/></svg></button>
                                    <button type="button" title="删除行"><svg><use href="#i-rowdel"/></svg></button>
                                    <button type="button" title="前插入列"><svg><use href="#i-colins"/></svg></button>
                                    <button type="button" title="删除列"><svg><use href="#i-coldel"/></svg></button>
                                    <button type="button" title="合并多个单元格"><svg><use href="#i-merge"/></svg></button>
                                    <button type="button" title="右合并单元格"><svg><use href="#i-mergeright"/></svg></button>
                                    <button type="button" title="下合并单元格"><svg><use href="#i-mergedown"/></svg></button>
                                    <button type="button" title="完全拆分单元格"><svg><use href="#i-splitcells"/></svg></button>
                                    <button type="button" title="拆分成行"><svg><use href="#i-splitrows"/></svg></button>
                                    <button type="button" title="拆分成列"><svg><use href="#i-splitcols"/></svg></button>
                                    <button type="button" title="图表"><svg><use href="#i-chart"/></svg></button><i class="sep"></i>
                                    <button type="button" title="打印"><svg><use href="#i-print"/></svg></button>
                                    <button type="button" title="预览"><svg><use href="#i-preview"/></svg></button>
                                    <button type="button" title="查询替换"><svg><use href="#i-find"/></svg></button>
                                    <button type="button" title="帮助"><svg><use href="#i-help"/></svg></button>
                                    <button type="button" title="从草稿箱加载"><svg><use href="#i-drafts"/></svg></button>
                                </div>
                            </div>
                            <div class="editor-body"></div>
                        </div>
                    </div>
                </div>
            </form>
        </main>
        <div class="vbar main-vbar"><i class="up"></i><i></i><i class="thumb"></i></div>
    </div>

    <!-- Taskbar -->
    <footer class="taskbar">
        <button class="start" aria-label="开始"><svg viewBox="0 0 38 38"><circle cx="19" cy="19" r="18" fill="url(#g-orb)" stroke="#2d5870"/><path d="M10 12c3-2 6-1 8 0l-2 7c-2-1-5-2-8 0z" fill="#f0642c"/><path d="M20 12c3 2 6 2 9 1l-2 7c-3 1-6 1-9-1z" fill="#8cc840"/><path d="M8 21c3-2 5-1 8 0l-2 7c-2-1-5-2-8 0z" fill="#3f9ce8"/><path d="M17 22c3 2 6 2 9 1l-2 7c-3 1-6 1-9-1z" fill="#ffcf3a"/><path d="M3 15C6 4 32 4 35 15 27 9 11 9 3 15z" fill="#fff" opacity=".45"/></svg></button>
        <i class="grip"></i>
        <button class="task task-im" aria-label="阿里旺旺"><svg><use href="#drop"/></svg></button>
        <i class="stack"></i>
        <button class="task task-chrome" aria-label="Chrome"><svg viewBox="-15 -15 30 30"><circle r="15" fill="#fc3"/><path d="M-13-7.500A15 15 0 0 1 13-7.500H0A7.500 7.500 0 0 0-6.500 4z" fill="#dd4b3e"/><path d="M-13-7.500A15 15 0 0 0-1 15L6.500 4A7.500 7.500 0 0 1-6.500 4z" fill="#1aa15f"/><circle r="7" fill="#fff"/><circle r="5.500" fill="#4c8bf5"/></svg></button>
        <div class="tray">
            <i class="grip"></i>
            <span class="lang">CH</span>
            <svg class="tray-icon"><use href="#sogou"/></svg>
            <svg class="tray-icon" viewBox="0 0 16 16"><circle cx="8" cy="8" r="7" fill="#1a2fa0" stroke="#cdd"/><path d="M5.500 6.500c0-3.500 5-3.500 5-.5 0 2-2.500 2-2.500 4M8 11v2" fill="none" stroke="#fff" stroke-width="1.800"/></svg>
            <svg class="tray-small" viewBox="0 0 8 18"><path d="M2.500 1.500h5v3h-5zM.5 3.500h5v3h-5z" fill="#811" stroke="#fff"/><path d="M1 13h6l-3 3z" fill="#fff"/></svg>
            <svg class="tray-icon"><use href="#drop"/></svg>
            <svg class="tray-icon"><use href="#drop"/></svg>
            <svg class="tray-icon" viewBox="0 0 16 16"><path d="M1.500 1.500h13v13h-13z" fill="#777" stroke="#ddd"/><path d="M3 11.500h10M8 12v2" stroke="#333"/></svg>
            <svg class="tray-icon" viewBox="0 0 16 16"><path d="M1 3c4 0 5-2 7-2s3 2 7 2c0 6-2 10-7 12C3 13 1 9 1 3z" fill="#2d7df0" stroke="#fff"/><path d="m3 6 5 4 5-4M5 10l3 2 3-2" fill="none" stroke="#fff" stroke-width="1.500"/></svg>
            <svg class="tray-icon" viewBox="0 0 16 16"><path d="M1 6h3l5-4v13l-5-4H1z" fill="#d8543a" stroke="#f0b0a0" stroke-width=".7"/><path d="M13 4v9" stroke="#a33"/></svg>
            <svg class="tray-icon" viewBox="0 0 16 16"><path d="M3 2h5v12H3z" fill="none" stroke="#fff"/><path d="M9 4h5v4l-2 2v4M10 1v3M13 1v3" fill="none" stroke="#fff" stroke-width="1.500"/><path d="m2 8 6 6M8 8l-6 6" stroke="#f22" stroke-width="2.500"/></svg>
            <svg class="tray-icon" viewBox="0 0 16 16"><path d="M2 14v-3M5 14V9M8 14V7M11 14V5M14 14V3" stroke="#fff" stroke-width="2"/></svg>
            <svg class="tray-icon" viewBox="0 0 16 16"><path d="M1 6h3l4-4v12l-4-4H1z" fill="#fff"/><path d="M10 6v4M12 4c2 2 2 6 0 8M14 3c2 3 2 7 0 10" fill="none" stroke="#fff"/></svg>
        </div>
        <div class="clock"><span>16:32</span><span>2016/8/18</span></div>
        <button class="desktop" aria-label="显示桌面"></button>
    </footer>

    <!-- Floating windows over the desktop -->
    <div class="tip">宝圣鑫金刚网</div>
    <div class="ime">
        <svg class="ime-logo"><use href="#sogou"/></svg>
        <span>中</span>
        <svg viewBox="0 0 16 16"><path d="M10 1c3 6-2 11-9 10 5 6 14 3 14-4 0-3-2-5-5-6z" fill="#1c6fc4"/></svg>
        <svg viewBox="0 0 16 16"><circle cx="4" cy="5" r="2" fill="none" stroke="#1c6fc4" stroke-width="1.500"/><path d="M9 9h4v3l-3 3 1-3H9z" fill="#1c6fc4"/></svg>
        <svg viewBox="0 0 16 16"><path d="M0 3h16v11H0z" fill="#1c6fc4"/><path d="M2 5.500h12M2 8.500h12" stroke="#fff" stroke-dasharray="2 1"/><path d="M4 11.500h8" stroke="#fff"/></svg>
        <svg viewBox="0 0 16 16"><circle cx="6" cy="4" r="3" fill="#b4c2d6"/><path d="M1 14c0-8 10-8 10 0z" fill="#b4c2d6"/><path d="M7 9h9v6H7z" fill="#93a5bf"/><path d="M9.500 10v4M12 10.500h2.500V14H12" fill="none" stroke="#fff"/></svg>
        <svg viewBox="0 0 16 16"><path d="m5 1-5 3 2 4 2-1v8h8V7l2 1 2-4-5-3c-1 2-5 2-6 0z" fill="#1c6fc4"/></svg>
        <svg viewBox="0 0 16 16"><path d="M15 4a5 5 0 0 1-6 6l-5 5-3-3 5-5a5 5 0 0 1 6-6L9 4l3 3z" fill="#1c6fc4"/></svg>
    </div>
    <div class="meter"></div>
</body>
</html>
```
FILE: styles.css
```css
* {
    box-sizing: border-box;
}

body {
    margin: 0;
    height: 100vh;
    display: flex;
    flex-direction: column;
    overflow: hidden;
    font-family: "Noto Sans Mono CJK SC", "Noto Sans CJK SC", sans-serif;
    font-size: 12px;
    color: #333;
    background: #fff;
}

button {
    padding: 0;
    border: 0;
    background: none;
    font: inherit;
    color: inherit;
}

button svg {
    display: block;
}

a {
    color: inherit;
    text-decoration: none;
}

h1, h2, h3, p, ul {
    margin: 0;
    padding: 0;
}

em {
    font-style: normal;
    color: #f00;
}

.sprite {
    position: absolute;
    width: 0;
    height: 0;
}

/* Browser tabs */
.tabstrip {
    display: flex;
    height: 25px;
    flex: none;
    padding-left: 5px;
    font-family: "Noto Sans CJK SC", sans-serif;
    background: linear-gradient(110deg, #c86464 0, #a01010 30%, #9c0c0c 52%, #a82024 58%, #980a0a 64%, #a81c20 70%, #9c0a0c 80%, #9c0c0c 90%, #c05050 100%);
}

.tab {
    display: flex;
    align-items: center;
    width: 200px;
    padding: 0 10px 0 14px;
    clip-path: polygon(0 100%, 5% 8%, 7% 0, 93% 0, 95% 8%, 100% 100%);
    background: #d0adb3;
    color: #4a3a3e;
}

.tab-active {
    margin-left: -6px;
    background: #f6f6f6;
    color: #222;
}

.tab-icon {
    width: 16px;
    height: 16px;
    margin-right: 4px;
    color: #555;
}

.tab-title {
    flex: 1;
    overflow: hidden;
    white-space: nowrap;
    line-height: 20px;
}

.tab-active .tab-title {
    -webkit-mask-image: linear-gradient(90deg, #000 80%, transparent);
    mask-image: linear-gradient(90deg, #000 80%, transparent);
}

.tab-close {
    width: 8px;
    margin: 0 2px 0 8px;
    color: #755;
}

.tab-new {
    align-self: center;
    width: 30px;
    height: 14px;
    margin-left: 1px;
    clip-path: polygon(0 0, 82% 0, 100% 100%, 18% 100%);
    background: #d6b3b6;
}

.window-controls {
    display: flex;
    margin-left: auto;
    padding-right: 3px;
}

.win {
    display: flex;
    justify-content: center;
    align-items: center;
    width: 26px;
    height: 18px;
    border: 1px solid #e0a0a0;
    border-top: 0;
    background: linear-gradient(#d49a9a, #c87878 48%, #8c1010 50%, #a83838);
    box-shadow: inset 0 0 1px #500;
}

.win svg {
    width: 12px;
    height: 12px;
}

.win.user {
    width: 24px;
    margin-right: 8px;
    border-radius: 0 0 4px 4px;
}

.win.min {
    width: 28px;
    border-radius: 0 0 0 4px;
}

.win.close {
    width: 48px;
    border-radius: 0 0 4px 0;
    background: linear-gradient(#e0a090, #d07060 48%, #b02010 50%, #d85838);
}

/* Address bar */
.toolbar {
    display: flex;
    align-items: center;
    flex: none;
    height: 36px;
    padding: 0 8px;
    background: linear-gradient(#f8f8f8, #e6e6e6);
    border-bottom: 1px solid #9c9c9c;
}

.nav-btn {
    width: 18px;
    margin-right: 11px;
}

.omnibox {
    display: flex;
    flex: 1;
    align-items: center;
    height: 27px;
    padding: 0 4px 0 7px;
    border: 1px solid #b4b4b4;
    border-radius: 3px;
    background: #fff;
}

.page-icon {
    width: 12px;
    height: 16px;
    margin-right: 6px;
    color: #888;
}

.url {
    flex: 1;
    font-family: "Open Sans", sans-serif;
    font-size: 16px;
    line-height: 24px;
    color: #111;
}

.path {
    color: #808080;
}

.key {
    width: 10px;
    height: 16px;
    margin-right: 8px;
}

.star {
    width: 18px;
    height: 18px;
}

.ext {
    width: 18px;
    margin: 0 18px 0 9px;
}

.menu {
    width: 14px;
    margin-right: 2px;
}

/* Site header */
.site-header {
    position: relative;
    display: flex;
    align-items: center;
    flex: none;
    height: 43px;
    padding-left: 5px;
    border-bottom: 2px solid #7fe2f8;
    box-shadow: inset 0 -1px #0088c4;
    background: linear-gradient(#058dd1, #0a93d6 50%, #14a0e0);
    color: #fff;
}

.header-art {
    position: absolute;
    left: 0;
    top: 0;
    width: 400px;
    height: 40px;
}

.logo {
    position: relative;
    width: 42px;
    height: 38px;
}

.site-header h1 {
    position: relative;
    flex: 1;
    margin-left: 6px;
    font-size: 20px;
    font-weight: 500;
    line-height: 32px;
}

.header-links {
    display: flex;
    gap: 12px;
    line-height: 18px;
    white-space: nowrap;
}

.header-links b {
    font-weight: 400;
    color: #ff0;
}

.hotline {
    margin: 0 12px 0 6px;
}

.qq {
    display: flex;
    align-items: center;
    gap: 5px;
    height: 22px;
    margin-left: 6px;
    padding: 0 6px;
    border-radius: 2px;
    background: linear-gradient(#8fd4f2, #b4e6fa);
    color: #123c5c;
    font-family: "Noto Sans CJK SC", sans-serif;
    font-size: 13px;
}

.qq svg {
    width: 16px;
    height: 20px;
}

/* Frames */
.workspace {
    display: flex;
    flex: 1;
    min-height: 0;
}

.side {
    display: grid;
    grid-template-columns: 173px 17px;
    grid-template-rows: minmax(0, 1fr) 17px;
}

.side-menu {
    position: relative;
    overflow: hidden;
    background: linear-gradient(#3a76b8, #2f80c4 20%, #1898d8 42%, #1a9edd 58%, #3aa6e0 75%, #55b6e8 90%, #5cbcea);
    color: #fff;
    white-space: nowrap;
}

.side-art {
    position: absolute;
    left: 0;
    top: 0;
    width: 100%;
    height: 100%;
}

.side-menu h2, .side-menu h3, .side-menu ul, .account {
    position: relative;
}

.side-menu h2 {
    padding-left: 15px;
    font-size: 12px;
    line-height: 30px;
    color: #ff0;
}

.account {
    padding-left: 26px;
    line-height: 18px;
}

.strong {
    font-weight: 700;
}

.side-menu h3 {
    display: flex;
    align-items: center;
    height: 28px;
    padding-left: 10px;
    font-size: 14px;
}

.side-menu .hot {
    color: #f00;
}

.toggle {
    width: 12px;
    height: 12px;
    margin-right: 6px;
}

.new {
    width: 29px;
    height: 9px;
    margin-left: 16px;
}

.side-menu ul {
    list-style: none;
}

.side-menu li {
    display: flex;
    align-items: center;
    gap: 6px;
    height: 24px;
    padding-left: 27px;
}

.side-menu li::before {
    content: "";
    width: 2px;
    height: 2px;
    margin-right: -1px;
    background: #ff0;
}

.post {
    color: #2c4a66;
}

/* Scrollbars */
.vbar, .hbar {
    display: grid;
    background: #f0f0f0;
}

.vbar {
    width: 17px;
}

.thumb {
    background: #c1c1c1;
}

.vbar .thumb {
    margin: 0 2px;
}

.hbar .thumb {
    margin: 2px 0;
}

.side-vbar {
    grid-template-rows: 17px 412fr 178fr;
}

.side-vbar .down {
    align-self: end;
}

.hbar {
    grid-template-columns: 17px 133fr 23fr;
}

.corner {
    background: #dcdcdc;
}

.main-vbar {
    grid-template-rows: 17px 123fr 256fr 228fr;
}

.up, .down, .left, .right {
    width: 17px;
    height: 17px;
    background: #505050;
}

.off {
    background: #a3a3a3;
}

.up {
    clip-path: polygon(50% 36%, 74% 60%, 26% 60%);
}

.down {
    clip-path: polygon(50% 62%, 74% 38%, 26% 38%);
}

.left {
    clip-path: polygon(36% 50%, 60% 26%, 60% 74%);
}

.right {
    justify-self: end;
    clip-path: polygon(62% 50%, 38% 26%, 38% 74%);
}

/* Product form */
.frame {
    flex: 1;
    min-width: 0;
    overflow: hidden;
    padding: 0 32px 0 8px;
    background: #2a8cc8;
}

.panel {
    display: flex;
    flex-direction: column;
    height: 100%;
    padding: 0 13px 0 14px;
    border: solid #00659c;
    border-width: 0 1px;
    background: linear-gradient(90deg, #a8dcf2, #fff 9px, #fff calc(100% - 9px), #a8dcf2);
}

.row {
    display: grid;
    grid-template-columns: 219px 1fr;
    flex: none;
    border-bottom: 1px solid #ccc;
    background: #fff;
}

/* the form is scrolled, its first row starts above the frame */
.row:first-child {
    margin-top: -21px;
}

.row-editor {
    flex: 1;
    border-bottom: 0;
}

.label {
    display: flex;
    align-items: center;
    justify-content: flex-end;
    padding-right: 3px;
    border-right: 1px solid #ccc;
    background: #ededed;
    color: #000;
}

.label em {
    margin-right: 4px;
    font-size: 16px;
}

.field {
    padding: 2px 10px;
}

.field-category {
    display: flex;
    align-items: flex-start;
    gap: 5px;
    padding-top: 0;
}

.listbox {
    display: flex;
    border: 1px solid #a9a9a9;
    background: #fff;
}

.listbox select {
    flex: 1;
    min-width: 0;
    padding: 0;
    border: 0;
    overflow: hidden;
    outline: none;
    background: #fff;
    font-family: inherit;
    font-size: 13px;
    color: #000;
}

.listbox option {
    height: 17px;
    min-height: 0;
    padding: 0 2px;
    line-height: 17px;
}

.listbox-sub {
    width: 103px;
    height: 86px;
}

.listbox-main {
    width: 130px;
    height: 70px;
}

.listbox-sub .vbar {
    grid-template-rows: 1fr 17px;
}

.listbox-main .vbar {
    grid-template-rows: 26px 1fr 17px;
}

.hint {
    line-height: 18px;
    color: #008000;
}

.hint a {
    color: #0052b4;
}

.field-category .hint {
    align-self: flex-end;
    margin-bottom: 12px;
}

.field-params {
    padding: 8px 16px;
}

.params {
    width: 100%;
    max-width: 705px;
    table-layout: fixed;
    border-collapse: collapse;
}

.params .name {
    width: 101px;
}

.params th, .params td {
    height: 26px;
    padding: 0 1px 0 0;
    border: 1px solid #ccc;
    line-height: 18px;
    text-align: left;
}

.params th {
    font-weight: 400;
    text-align: right;
}

input[type="text"] {
    width: 173px;
    height: 21px;
    padding: 0 1px;
    border: 1px solid #a9a9a9;
    font-family: "Open Sans", sans-serif;
    font-size: 13px;
    color: #333;
    vertical-align: middle;
}

input[type="radio"] {
    width: 12px;
    height: 12px;
    margin: 0 3px 3px 5px;
    vertical-align: middle;
    appearance: none;
    border: 1px solid #999;
    border-radius: 50%;
    background: linear-gradient(#f4f4f4, #d8d8d8);
}

input[type="radio"]:checked {
    background: radial-gradient(circle, #555 0 3px, #e4e4e4 4px);
}

.params td label + label input {
    margin-left: 0;
}

.field-price {
    display: flex;
    align-items: center;
    gap: 5px;
    height: 28px;
}

#price {
    width: 104px;
    height: 22px;
    border-color: #5b9bf0;
    box-shadow: 0 0 0 1px #a8c8f4;
}

.unit {
    position: relative;
}

.unit select {
    display: block;
    width: 78px;
    height: 19px;
    padding: 0 4px;
    appearance: none;
    border: 1px solid #a9a9a9;
    border-radius: 2px;
    background: linear-gradient(#fff, #f4f4f4);
    font-family: inherit;
    font-size: 13px;
    line-height: 16px;
    color: #000;
}

.unit::after {
    content: "";
    position: absolute;
    right: 6px;
    top: 6px;
    border: solid transparent;
    border-width: 6px 3px 0;
    border-top-color: #222;
}

.thumbnail {
    width: 110px;
    height: 92px;
    padding: 1px 13px;
    border: 1px solid #f60;
}

.thumbnail svg {
    display: block;
    width: 80px;
    height: 80px;
}

.t-none {
    font: 18px "Noto Sans CJK SC", sans-serif;
    fill: #8a8a8a;
}

.t-size {
    font: bold 8px "Open Sans", "Noto Sans CJK SC", sans-serif;
    fill: #777;
}

svg text {
    text-anchor: middle;
}

.pick {
    display: block;
    width: 124px;
    height: 33px;
    margin: 1px 0 8px;
    border: 2px solid #808080;
    border-radius: 17px;
    background: linear-gradient(#606060, #404040);
    font-size: 18px;
    line-height: 28px;
    color: #fff;
}

/* Rich text editor */
.field-editor {
    display: flex;
    padding-bottom: 0;
}

.editor {
    display: flex;
    flex-direction: column;
    width: 100%;
    max-width: 702px;
    border: 1px solid #ccc;
    border-bottom: 0;
    border-radius: 4px 4px 0 0;
}

.editor-bar {
    padding: 1px 2px 5px 3px;
    border-bottom: 1px solid #ccc;
    border-radius: 4px 4px 0 0;
    background: linear-gradient(#fff, #f0f0f0);
    box-shadow: 0 1px 3px #ddd;
}

.editor-body {
    flex: 1;
}

.bar-row {
    display: flex;
    align-items: center;
    height: 28px;
}

.bar-row button {
    position: relative;
    flex: none;
    width: 24px;
    height: 24px;
    padding: 2px;
}

.bar-row svg {
    width: 20px;
    height: 20px;
}

.bar-row .split {
    width: 34px;
}

.split::after {
    content: "";
    position: absolute;
    right: 4px;
    top: 11px;
    border: solid transparent;
    border-width: 3px 3px 0;
    border-top-color: #000;
}

.bar-row .full {
    margin-left: auto;
}

.sep {
    flex: none;
    width: 1px;
    height: 18px;
    margin: 0 4px;
    background: #ccc;
}

.combo {
    position: relative;
    width: 81px;
    height: 25px;
    margin: 2px 1px 0;
    border: 1px solid #ccc;
    border-radius: 2px;
    background: #fff;
}

.combo select {
    width: 70px;
    height: 23px;
    padding: 0 4px;
    appearance: none;
    border: 0;
    border-right: 1px solid #ccc;
    background: none;
    font-family: inherit;
    font-size: 12px;
    color: #000;
}

.combo::after {
    content: "";
    position: absolute;
    right: 2px;
    top: 10px;
    border: solid transparent;
    border-width: 3px 3px 0;
    border-top-color: #000;
}

.t-html {
    font: bold 7px "Liberation Sans", sans-serif;
    fill: #2f6da8;
}

.t-serif {
    font: 16px "Liberation Serif", serif;
    fill: #333;
}

.t-bold {
    font-weight: 700;
}

.t-italic {
    font-style: italic;
    font-weight: 700;
}

.t-abc {
    font: bold 8px "Liberation Serif", serif;
    fill: #333;
}

.t-mini {
    font: bold 8px "Liberation Sans", sans-serif;
    fill: #3d74d8;
}

.t-ab {
    font: bold 9px "Liberation Sans", sans-serif;
    fill: #333;
}

.t-sel {
    font: bold 12px "Liberation Serif", serif;
    fill: #333;
}

.t-case {
    font: 12px "Liberation Sans", sans-serif;
    fill: #111;
}

.t-a {
    font: 10px "Liberation Sans", sans-serif;
    fill: #111;
}

/* Taskbar */
.taskbar {
    display: flex;
    align-items: center;
    flex: none;
    height: 40px;
    padding-left: 8px;
    border-top: 1px solid #3c0000;
    box-shadow: inset 0 1px #c04848;
    background: linear-gradient(90deg, #780808, #7c0a0a 10%, #a00e10 15%, #a01012 60%, #7c0a0c 76%, #841014 90%, #7a080a);
    color: #fff;
}

.start {
    width: 38px;
}

.grip {
    width: 9px;
    height: 30px;
    margin: 0 10px 0 11px;
    background: radial-gradient(circle at 1px 1px, #2c0000 1px, transparent 1px) 0 0 / 4px 4px;
}

.task {
    display: flex;
    align-items: center;
    justify-content: center;
    width: 50px;
    height: 37px;
    border: 1px solid #e0a8a8;
    border-radius: 3px;
    background: linear-gradient(160deg, #d08888, #b03034 50%, #a01c20);
}

.task svg {
    width: 30px;
    height: 30px;
}

.stack {
    width: 6px;
    height: 36px;
    margin: 0 5px 0 1px;
    border: solid #c86a6a;
    border-width: 0 1px;
}

.task-chrome {
    width: 58px;
    background: linear-gradient(160deg, #f0d4d4, #d89898 50%, #cc7c7c);
}

.tray {
    display: flex;
    align-items: center;
    gap: 8px;
    margin-left: auto;
}

.tray .grip {
    margin: 0 2px 0 0;
}

.tray-icon {
    width: 16px;
    height: 16px;
}

.tray-small {
    width: 8px;
    height: 18px;
    margin: 0 3px;
}

.clock {
    display: flex;
    flex-direction: column;
    align-items: center;
    width: 60px;
    margin: 0 8px 0 15px;
    font-family: "Open Sans", sans-serif;
    line-height: 18px;
}

.desktop {
    width: 14px;
    height: 38px;
    border: 1px solid #c07070;
    background: linear-gradient(160deg, #b06060, #801418);
}

/* Floating windows over the desktop */
.tip {
    position: absolute;
    right: 59px;
    bottom: 60px;
    height: 18px;
    padding: 0 5px;
    border: 1px solid #767676;
    border-radius: 3px;
    background: #fff;
    box-shadow: 2px 2px 2px #999;
    color: #575757;
    line-height: 18px;
}

.ime {
    position: absolute;
    right: 0;
    bottom: 40px;
    display: flex;
    align-items: center;
    gap: 6px;
    height: 24px;
    padding-right: 3px;
    border: 1px solid #a8cce8;
    background: #fff;
    color: #1c6fc4;
}

.ime svg {
    width: 16px;
    height: 16px;
}

.ime span {
    font-size: 15px;
    font-weight: 700;
    line-height: 20px;
}

.ime .ime-logo {
    width: 28px;
    height: 28px;
    margin-left: -24px;
}

/* volume meter docked at the window edge */
.meter {
    position: absolute;
    right: 0;
    top: 523px;
    width: 9px;
    height: 59px;
    border: 2px solid #333842;
    border-right: 0;
    border-radius: 4px 0 0 4px;
    background:
        repeating-linear-gradient(#5a6070 0 1px, transparent 1px 2px) 2px 6px / 4px 46px no-repeat,
        linear-gradient(#333 0 50%, #d8e060 52%, #6fd080 75%, #5ee0e0) 2px 6px / 4px 46px no-repeat,
        #5a6070;
}
```
